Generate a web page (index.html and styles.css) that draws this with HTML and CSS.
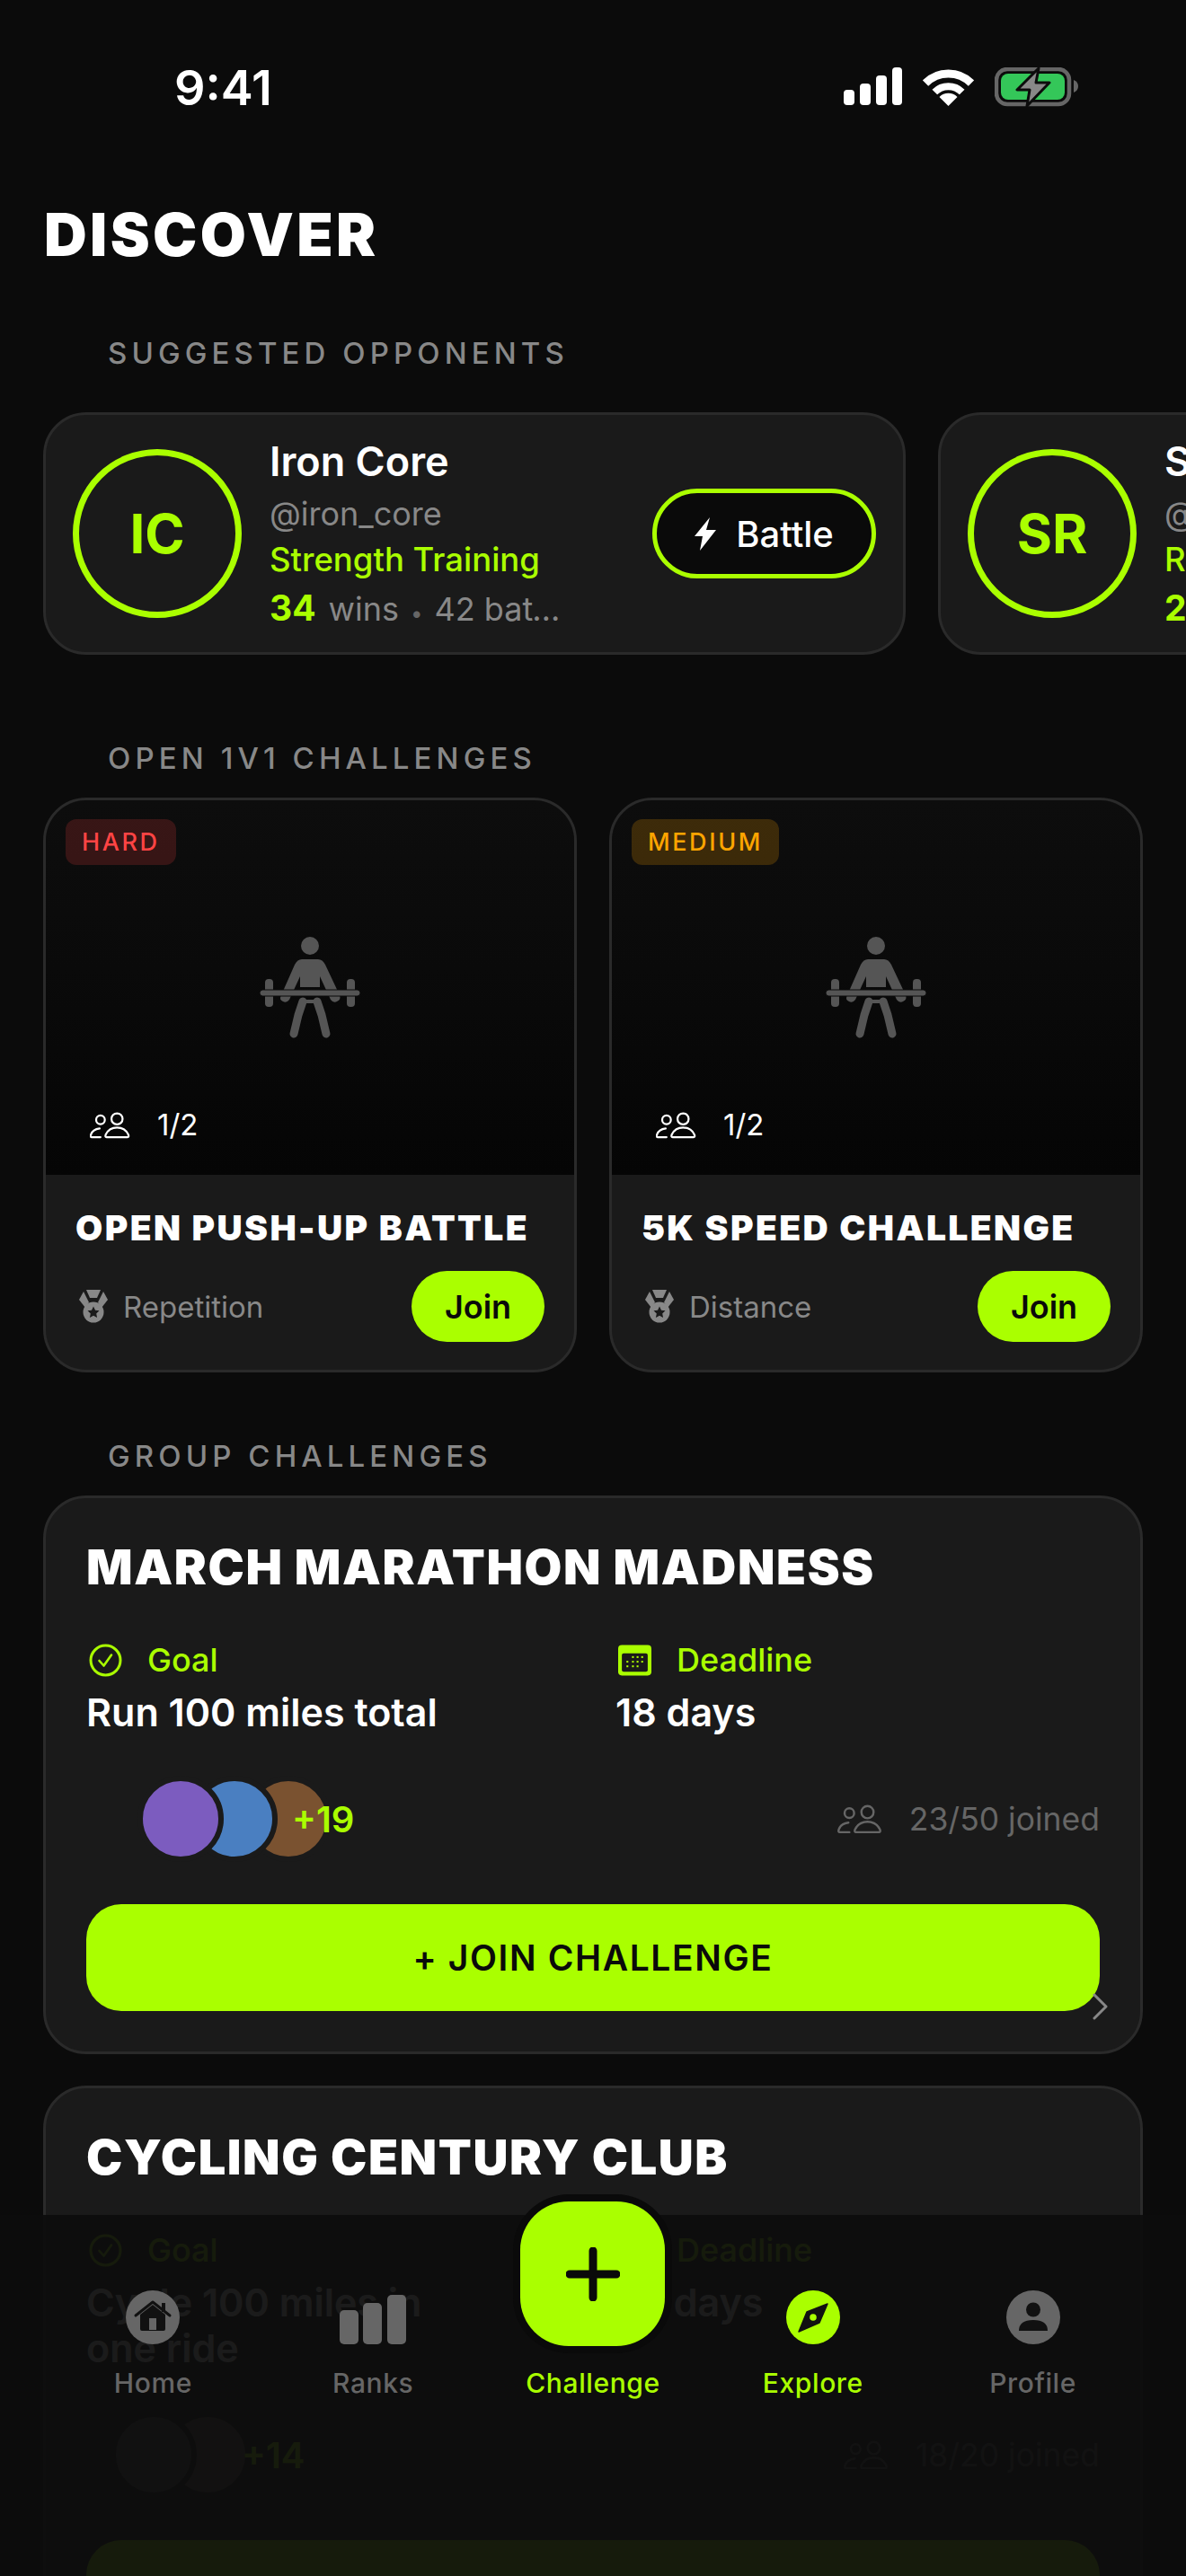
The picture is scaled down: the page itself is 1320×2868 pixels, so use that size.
FILE: index.html
```html
<!DOCTYPE html>
<html lang="en">
<head>
<meta charset="utf-8">
<title>Discover</title>
<link rel="stylesheet" href="styles.css">
</head>
<body>
<svg class="sprites" width="0" height="0" aria-hidden="true">
  <symbol id="lifter" viewBox="45 35 120 125">
    <circle cx="105" cy="51" r="10"/>
    <path d="M96 66H114Q119 66 122 72L138 106Q140 111 135 113Q131 115 128 111L116 85V97H94V85L82 111Q79 115 75 113Q70 111 73 106L88 72Q91 66 96 66Z"/>
    <rect x="55" y="88" width="9" height="31" rx="4"/>
    <rect x="146" y="88" width="9" height="31" rx="4"/>
    <rect x="49" y="100" width="112" height="7" rx="3.5" stroke="#0a0a0a" stroke-width="1"/>
    <rect x="93" y="111" width="24" height="4"/>
    <path d="M97 113L92 128L87 149M113 113L118 128L123 149" fill="none" stroke="currentColor" stroke-width="9" stroke-linecap="round" stroke-linejoin="round"/>
  </symbol>
  <symbol id="people" viewBox="40 25 46 32">
    <g fill="none" stroke="currentColor" stroke-width="2.3" stroke-linecap="round" stroke-linejoin="round">
      <circle cx="52" cy="35" r="5"/>
      <circle cx="71" cy="34" r="6.4"/>
      <path d="M59 55H83Q85 55 84 52Q80 44 71 44Q62 44 58 52Q57 55 59 55Z"/>
      <path d="M52 55H42Q40 55 41 52Q43 46 51 45"/>
    </g>
  </symbol>
  <symbol id="medal" viewBox="0 0 32 37">
    <path d="M8 0H24L20 9H12Z"/>
    <path d="M5 2L0 11L7 20L11 14L9 10Z"/>
    <path d="M27 2L32 11L25 20L21 14L23 10Z"/>
    <circle cx="16" cy="25" r="11.5"/>
    <path d="M16 18.5L18 22.8L22.5 23.3L19.2 26.4L20.1 31L16 28.7L11.9 31L12.8 26.4L9.5 23.3L14 22.8Z" fill="#1a1a1a"/>
  </symbol>
  <symbol id="check-ring" viewBox="0 0 37 37">
    <circle cx="18.5" cy="18.5" r="16.5" fill="none" stroke="currentColor" stroke-width="3"/>
    <path d="M11.5 19L16.5 24.5L25 12.5" fill="none" stroke="currentColor" stroke-width="2.6" stroke-linecap="round" stroke-linejoin="round"/>
  </symbol>
  <symbol id="calendar" viewBox="0 0 36 33">
    <rect width="36" height="33" rx="4" fill="currentColor"/>
    <rect x="4" y="9" width="28" height="20" rx="2" fill="#1a1a1a"/>
    <g fill="currentColor">
      <rect x="15" y="12" width="2" height="2"/><rect x="20" y="12" width="2" height="2"/><rect x="25" y="12" width="2" height="2"/>
      <rect x="9" y="17" width="2" height="2"/><rect x="15" y="17" width="2" height="2"/><rect x="20" y="17" width="2" height="2"/><rect x="25" y="17" width="2" height="2"/>
      <rect x="9" y="22" width="2" height="2"/><rect x="15" y="22" width="2" height="2"/><rect x="20" y="22" width="2" height="2"/>
    </g>
  </symbol>
  <symbol id="chevron" viewBox="0 0 18 30">
    <path d="M2 2L15 15L2 28" fill="none" stroke="currentColor" stroke-width="3" stroke-linecap="round" stroke-linejoin="round"/>
  </symbol>
</svg>

<div class="phone">
  <header class="status">
    <span class="clock">9:41</span>
    <div class="status-icons">
      <svg class="sig" width="65" height="44" viewBox="0 0 65 44" fill="#fff">
        <rect x="0" y="25" width="12" height="17" rx="4"/>
        <rect x="18" y="18" width="12" height="24" rx="4"/>
        <rect x="36" y="9" width="12" height="33" rx="4"/>
        <rect x="54" y="0" width="11" height="42" rx="4"/>
      </svg>
      <svg width="57" height="44" viewBox="0 0 57 44">
        <path d="M3 17.5A36 36 0 0 1 54 17.5" fill="none" stroke="#fff" stroke-width="9"/>
        <path d="M13.3 27.5A21.5 21.5 0 0 1 43.7 27.5" fill="none" stroke="#fff" stroke-width="8"/>
        <path d="M28.5 43L18.5 33A14 14 0 0 1 38.5 33Z" fill="#fff"/>
      </svg>
      <svg width="93" height="44" viewBox="0 0 93 44">
        <rect x="2" y="2" width="81" height="39" rx="12" fill="none" stroke="#666" stroke-width="4.5"/>
        <rect x="7" y="7" width="71" height="29" rx="8" fill="#34c759"/>
        <path d="M88 14Q93 16 93 21Q93 26 88 28Z" fill="#666"/>
        <path d="M49 1L25 25H39L36 43L61 17H46Z" fill="#888" stroke="#0c0c0c" stroke-width="3" stroke-linejoin="round"/>
      </svg>
    </div>
  </header>

  <h1 class="page-title">DISCOVER</h1>

  <section class="section">
    <h2 class="section-label">SUGGESTED OPPONENTS</h2>
    <div class="rail">
      <article class="opponent">
        <div class="avatar-ring">IC</div>
        <div class="opponent-info">
          <div class="opponent-name">Iron Core</div>
          <div class="opponent-handle">@iron_core</div>
          <div class="opponent-focus">Strength Training</div>
          <div class="opponent-stats"><b>34</b><span class="word">wins</span><span class="dot">•</span>42 battles</div>
        </div>
        <button class="battle-btn">
          <svg width="24" height="37" viewBox="0 0 24 37" fill="#fff"><path d="M17 0L0 21H9L6 37L24 14H13Z"/></svg>
          Battle
        </button>
      </article>
      <article class="opponent">
        <div class="avatar-ring">SR</div>
        <div class="opponent-info">
          <div class="opponent-name">Speed Runner</div>
          <div class="opponent-handle">@speed_runner</div>
          <div class="opponent-focus">Running</div>
          <div class="opponent-stats"><b>28</b><span class="word">wins</span><span class="dot">•</span>36 battles</div>
        </div>
        <button class="battle-btn">
          <svg width="24" height="37" viewBox="0 0 24 37" fill="#fff"><path d="M17 0L0 21H9L6 37L24 14H13Z"/></svg>
          Battle
        </button>
      </article>
    </div>
  </section>

  <section class="section">
    <h2 class="section-label">OPEN 1V1 CHALLENGES</h2>
    <div class="duel-grid">
      <article class="duel">
        <div class="duel-art">
          <span class="level level-hard">HARD</span>
          <svg class="lifter"><use href="#lifter"/></svg>
          <div class="slots"><svg class="slots-icon"><use href="#people"/></svg>1/2</div>
        </div>
        <div class="duel-body">
          <h3 class="duel-title">OPEN PUSH-UP BATTLE</h3>
          <div class="duel-foot">
            <span class="duel-kind"><svg class="medal"><use href="#medal"/></svg>Repetition</span>
            <button class="join-btn">Join</button>
          </div>
        </div>
      </article>
      <article class="duel">
        <div class="duel-art">
          <span class="level level-medium">MEDIUM</span>
          <svg class="lifter"><use href="#lifter"/></svg>
          <div class="slots"><svg class="slots-icon"><use href="#people"/></svg>1/2</div>
        </div>
        <div class="duel-body">
          <h3 class="duel-title">5K SPEED CHALLENGE</h3>
          <div class="duel-foot">
            <span class="duel-kind"><svg class="medal"><use href="#medal"/></svg>Distance</span>
            <button class="join-btn">Join</button>
          </div>
        </div>
      </article>
    </div>
  </section>

  <section class="section">
    <h2 class="section-label">GROUP CHALLENGES</h2>
    <div class="group-list">
      <article class="group">
        <h3 class="group-title">MARCH MARATHON MADNESS</h3>
        <div class="facts">
          <div>
            <div class="fact-head"><svg class="fact-icon"><use href="#check-ring"/></svg>Goal</div>
            <div class="fact-value">Run 100 miles total</div>
          </div>
          <div>
            <div class="fact-head"><svg class="fact-icon"><use href="#calendar"/></svg>Deadline</div>
            <div class="fact-value">18 days</div>
          </div>
        </div>
        <div class="crew crew-wide">
          <span class="face face-purple"></span>
          <span class="face face-blue"></span>
          <span class="face face-brown"></span>
          <span class="crew-more">+19</span>
          <span class="joined"><svg class="joined-icon"><use href="#people"/></svg>23/50 joined</span>
        </div>
        <button class="join-wide">+ JOIN CHALLENGE</button>
        <svg class="group-arrow"><use href="#chevron"/></svg>
      </article>
      <article class="group">
        <h3 class="group-title">CYCLING CENTURY CLUB</h3>
        <div class="facts">
          <div>
            <div class="fact-head"><svg class="fact-icon"><use href="#check-ring"/></svg>Goal</div>
            <div class="fact-value">Cycle 100 miles in one ride</div>
          </div>
          <div>
            <div class="fact-head"><svg class="fact-icon"><use href="#calendar"/></svg>Deadline</div>
            <div class="fact-value">25 days</div>
          </div>
        </div>
        <div class="crew crew-narrow">
          <span class="face face-slate"></span>
          <span class="face face-rust"></span>
          <span class="crew-more">+14</span>
          <span class="joined"><svg class="joined-icon"><use href="#people"/></svg>18/20 joined</span>
        </div>
        <button class="join-wide">+ JOIN CHALLENGE</button>
      </article>
    </div>
  </section>

  <nav class="tabbar">
    <div class="tab">
      <div class="tab-icon">
        <svg width="60" height="60" viewBox="0 0 60 60">
          <circle cx="30" cy="30" r="30" fill="#666"/>
          <path d="M16 27L30 16L44 27V43Q44 45 42 45H18Q16 45 16 43Z" fill="#111"/>
          <path d="M11 28L30 13L49 28" fill="none" stroke="#111" stroke-width="3" stroke-linecap="round" stroke-linejoin="round"/>
          <rect x="40" y="14" width="4" height="10" fill="#111"/>
          <rect x="26" y="31" width="8" height="13" fill="#666"/>
        </svg>
      </div>
      <span class="tab-label">Home</span>
    </div>
    <div class="tab">
      <div class="tab-icon">
        <svg width="74" height="55" viewBox="0 0 74 55" fill="#666">
          <rect x="0" y="17" width="21" height="38" rx="5"/>
          <rect x="26" y="9" width="21" height="46" rx="5"/>
          <rect x="53" y="0" width="21" height="55" rx="5"/>
        </svg>
      </div>
      <span class="tab-label">Ranks</span>
    </div>
    <div class="tab tab-on">
      <div class="tab-icon">
        <div class="fab">
          <svg width="60" height="60" viewBox="0 0 60 60"><path d="M30 4V56M4 30H56" stroke="#0a0a0a" stroke-width="9" stroke-linecap="round"/></svg>
        </div>
      </div>
      <span class="tab-label">Challenge</span>
    </div>
    <div class="tab tab-on">
      <div class="tab-icon">
        <svg width="60" height="60" viewBox="0 0 60 60">
          <circle cx="30" cy="30" r="30" fill="#aaff00"/>
          <path d="M46 15L37 36L14 46L23 24Z" fill="#111" stroke="#111" stroke-width="1.5" stroke-linejoin="round"/>
          <circle cx="30" cy="30" r="3.8" fill="#aaff00"/>
        </svg>
      </div>
      <span class="tab-label">Explore</span>
    </div>
    <div class="tab">
      <div class="tab-icon">
        <svg width="60" height="60" viewBox="0 0 60 60">
          <circle cx="30" cy="30" r="30" fill="#666"/>
          <circle cx="30" cy="21.5" r="8" fill="#111"/>
          <path d="M14 45Q14 33 30 33Q46 33 46 45Z" fill="#111"/>
        </svg>
      </div>
      <span class="tab-label">Profile</span>
    </div>
  </nav>
</div>
</body>
</html>
```
FILE: styles.css
```css
* { box-sizing: border-box; }

html, body {
  margin: 0;
  padding: 0;
  background: #0b0b0b;
}

body {
  font-family: Inter, "Liberation Sans", sans-serif;
  color: #fff;
}

.sprites { position: absolute; }

.phone {
  position: relative;
  width: 1320px;
  height: 2868px;
  overflow: hidden;
  background: #0b0b0b;
}

/* Status bar */
.status {
  display: flex;
  justify-content: space-between;
  align-items: flex-start;
  height: 221px;
  padding: 68px 120px 0 194px;
}
.clock {
  font-size: 54px;
  line-height: 60px;
  font-weight: 600;
}
.status-icons {
  display: flex;
  gap: 23px;
  margin-top: 7px;
}

.page-title {
  margin: 0 0 72px;
  padding-left: 49px;
  font-size: 66px;
  line-height: 80px;
  font-weight: 900;
  letter-spacing: 3.4px;
}

/* Sections */
.section { margin-bottom: 73px; }
.section-label {
  margin: 0 0 24px;
  padding-left: 120px;
  font-size: 33px;
  line-height: 40px;
  font-weight: 500;
  letter-spacing: 5.1px;
  color: #888;
}

/* Suggested opponents */
.rail {
  display: flex;
  gap: 36px;
  padding: 22px 48px;
}
.opponent {
  flex: 0 0 960px;
  height: 270px;
  display: flex;
  align-items: center;
  padding: 0 30px;
  background: #1a1a1a;
  border: 3px solid #2a2a2a;
  border-radius: 48px;
}
.avatar-ring {
  flex: 0 0 188px;
  height: 188px;
  display: flex;
  align-items: center;
  justify-content: center;
  border: 7px solid #aaff00;
  border-radius: 50%;
  color: #aaff00;
  font-size: 60px;
  font-weight: 700;
}
.opponent-info {
  width: 332px;
  margin-left: 31px;
  padding-top: 10px;
  display: flex;
  flex-direction: column;
}
.opponent-name { font-size: 45px; line-height: 60px; font-weight: 600; }
.opponent-handle { font-size: 36px; line-height: 56px; color: #888; }
.opponent-focus { font-size: 36.5px; line-height: 46px; font-weight: 500; color: #aaff00; }
.opponent-stats {
  font-size: 36px;
  line-height: 62px;
  color: #888;
  white-space: nowrap;
  overflow: hidden;
  text-overflow: ellipsis;
}
.opponent-stats b { font-size: 39px; font-weight: 700; color: #aaff00; }
.word { margin-left: 14px; }
.dot { margin: 0 13px; font-size: 24px; color: #666; }
.battle-btn {
  margin-left: auto;
  flex: 0 0 249px;
  height: 100px;
  display: flex;
  align-items: center;
  justify-content: center;
  gap: 22px;
  padding: 0;
  background: #0a0a0a;
  border: 5px solid #aaff00;
  border-radius: 50px;
  color: #fff;
  font: 500 40px Inter, sans-serif;
}

/* Open 1v1 challenges */
.duel-grid {
  display: grid;
  grid-template-columns: 1fr 1fr;
  gap: 36px;
  padding: 0 48px;
}
.duel {
  height: 640px;
  display: flex;
  flex-direction: column;
  overflow: hidden;
  background: #1a1a1a;
  border: 3px solid #2a2a2a;
  border-radius: 48px;
}
.duel-art {
  position: relative;
  flex: 0 0 417px;
  display: flex;
  align-items: center;
  justify-content: center;
  background: linear-gradient(180deg, #0d0d0d 0%, #0a0a0a 45%, #050505 100%);
}
.lifter {
  width: 120px;
  height: 125px;
  fill: #555;
  color: #555;
}
.level {
  position: absolute;
  left: 22px;
  top: 21px;
  height: 51px;
  padding: 0 18px;
  display: flex;
  align-items: center;
  border-radius: 12px;
  font-size: 27px;
  font-weight: 500;
  letter-spacing: 2.6px;
}
.level-hard { color: #ff4444; background: rgba(255, 68, 68, 0.18); }
.level-medium { color: #ffa500; background: rgba(255, 165, 0, 0.2); }
.slots {
  position: absolute;
  left: 49px;
  top: 343px;
  display: flex;
  align-items: center;
  gap: 30px;
  font-size: 33px;
  line-height: 36px;
  color: #fff;
}
.slots-icon { width: 45px; height: 31px; color: #fff; }
.duel-body { flex: 1; padding: 0 33px; }
.duel-title {
  margin: 35px 0 0;
  font-size: 39px;
  line-height: 48px;
  font-weight: 900;
  letter-spacing: 2.4px;
  white-space: nowrap;
}
.duel-foot {
  display: flex;
  align-items: center;
  justify-content: space-between;
  margin-top: 24px;
}
.duel-kind {
  display: flex;
  align-items: center;
  gap: 17px;
  font-size: 33px;
  color: #888;
}
.medal { width: 32px; height: 37px; margin-left: 4px; fill: #888; }
.join-btn {
  width: 148px;
  height: 79px;
  padding: 0;
  border: 0;
  border-radius: 40px;
  background: #aaff00;
  color: #0a0a0a;
  font: 600 36px Inter, sans-serif;
}

/* Group challenges */
.group-list {
  display: flex;
  flex-direction: column;
  gap: 35px;
  padding: 0 48px;
}
.group {
  position: relative;
  padding: 45px;
  background: #1a1a1a;
  border: 3px solid #2a2a2a;
  border-radius: 48px;
}
.group-title {
  margin: 0;
  font-size: 54px;
  line-height: 64px;
  font-weight: 900;
  letter-spacing: 1.6px;
  white-space: nowrap;
}
.facts {
  display: grid;
  grid-template-columns: 444px 1fr;
  gap: 145px;
  margin-top: 49px;
}
.fact-head {
  display: flex;
  align-items: center;
  gap: 28px;
  height: 44px;
  font-size: 36px;
  font-weight: 500;
  color: #aaff00;
}
.fact-icon { width: 37px; height: 37px; color: #aaff00; margin-left: 3px; }
.fact-value {
  margin-top: 11px;
  font-size: 43px;
  line-height: 51px;
  font-weight: 600;
}
.crew {
  display: flex;
  align-items: center;
  height: 96px;
  margin-top: 45px;
}
.crew-wide { padding-left: 57px; }
.crew-narrow { padding-left: 27px; }
.face {
  position: relative;
  flex: 0 0 96px;
  height: 96px;
  margin-right: -36px;
  border: 6px solid #1a1a1a;
  border-radius: 50%;
}
.face:nth-child(1) { z-index: 3; }
.face:nth-child(2) { z-index: 2; }
.face:nth-child(3) { z-index: 1; }
.face-purple { background: #7c5cbf; }
.face-blue { background: #4a7fc1; }
.face-brown { background: #7a5230; }
.face-slate { background: #5a5a5a; }
.face-rust { background: #6a5a50; }
.crew-more {
  position: relative;
  z-index: 4;
  font-size: 40px;
  font-weight: 600;
  color: #aaff00;
}
.crew-wide .crew-more { margin-left: -8px; }
.crew-narrow .crew-more { margin-left: 26px; }
.joined {
  margin-left: auto;
  display: flex;
  align-items: center;
  gap: 30px;
  font-size: 35.5px;
  color: #666;
}
.joined-icon { width: 50px; height: 34px; color: #666; }
.join-wide {
  display: block;
  width: 100%;
  height: 119px;
  margin-top: 47px;
  padding: 0;
  border: 0;
  border-radius: 39px;
  background: #aaff00;
  color: #0a0a0a;
  font: 600 39px Inter, sans-serif;
  letter-spacing: 1.6px;
}
.group-arrow {
  position: absolute;
  left: 1165px;
  top: 551px;
  width: 18px;
  height: 30px;
  color: #888;
}

/* Bottom navigation, translucent over the scrolling list */
.tabbar {
  position: absolute;
  z-index: 10;
  left: 0;
  right: 0;
  bottom: 0;
  height: 402px;
  display: grid;
  grid-template-columns: repeat(5, 1fr);
  padding: 84px 48px 0;
  background: rgba(13, 13, 13, 0.94);
}
.tab {
  display: flex;
  flex-direction: column;
  align-items: center;
}
.tab-icon {
  height: 60px;
  display: flex;
  align-items: flex-end;
}
.tab-label {
  margin-top: 23px;
  font-size: 30px;
  line-height: 40px;
  font-weight: 500;
  letter-spacing: 0.6px;
  color: #666;
}
.tab-on .tab-label { color: #aaff00; }
.fab {
  flex: 0 0 161px;
  width: 161px;
  height: 161px;
  margin-bottom: -2px;
  display: flex;
  align-items: center;
  justify-content: center;
  background: #aaff00;
  border-radius: 54px;
  box-shadow: 0 0 0 8px #0a0a0a;
}
```
